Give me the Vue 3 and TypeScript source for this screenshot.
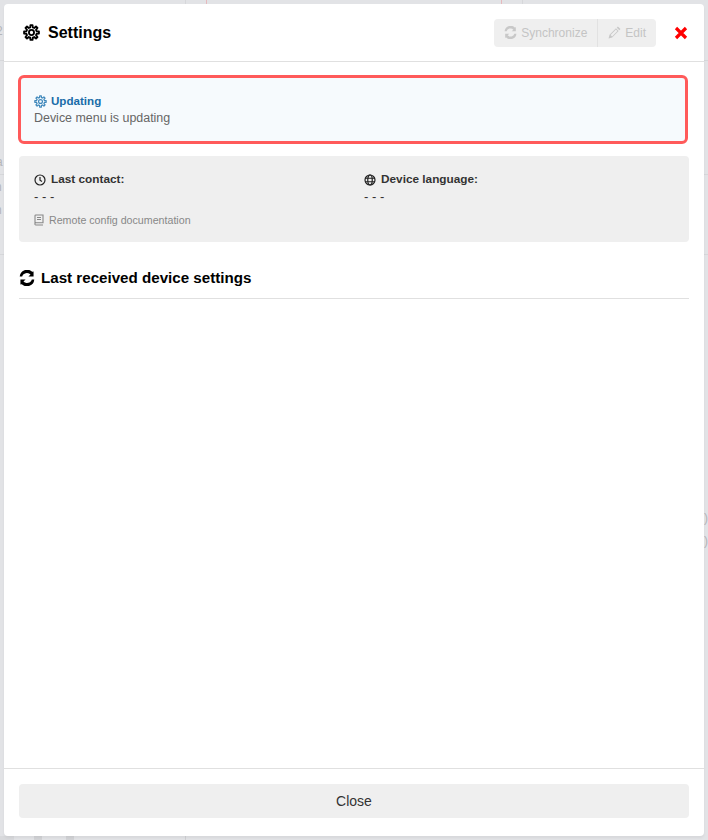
<script setup lang="ts">
const gear = (() => {
  const cx = 12, cy = 12, teeth = 8
  const pts: string[] = []
  for (let i = 0; i < teeth; i++) {
    const a = (i / teeth) * Math.PI * 2 - Math.PI / 2
    const w = Math.PI / teeth
    const p = (r: number, t: number) => `${(cx + r * Math.cos(t)).toFixed(2)} ${(cy + r * Math.sin(t)).toFixed(2)}`
    pts.push(`${i === 0 ? 'M' : 'L'}${p(7.4, a - w * 0.62)}`, `L${p(10.6, a - w * 0.36)}`, `L${p(10.6, a + w * 0.36)}`, `L${p(7.4, a + w * 0.62)}`)
  }
  return pts.join(' ') + ' Z'
})()
const syncPath = 'M20.2 3.800v6.400h-6.400l2.600-2.600A6.200 6.200 0 0 0 6 10.200H2.900a9.200 9.200 0 0 1 15.600-5.900zM3.800 20.200v-6.400h6.400l-2.600 2.600A6.200 6.200 0 0 0 18 13.800h3.100a9.200 9.200 0 0 1-15.600 5.900z'

// Faint remains of the page that sits behind the modal
const rules = [
  { x: 206, y: 0, w: 1, h: 4, c: '#e6b9bd' },
  { x: 501, y: 0, w: 1, h: 4, c: '#e6b9bd' },
  { x: 185, y: 0, w: 1, h: 4, c: '#d6d7da' },
  { x: 522, y: 0, w: 1, h: 4, c: '#d6d7da' },
  { x: 185, y: 836, w: 1, h: 4, c: '#cfd0d3' },
  { x: 0, y: 836, w: 14, h: 4, c: '#d8d9dc' },
  { x: 34, y: 836, w: 8, h: 4, c: '#d2d3d6' },
  { x: 66, y: 836, w: 8, h: 4, c: '#d2d3d6' },
  { x: 704, y: 60, w: 4, h: 1, c: '#d6d7da' },
  { x: 704, y: 174, w: 4, h: 1, c: '#d6d7da' },
  { x: 704, y: 254, w: 4, h: 1, c: '#d6d7da' },
  { x: 0, y: 60, w: 4, h: 1, c: '#d6d7da' },
  { x: 0, y: 174, w: 4, h: 1, c: '#d6d7da' },
  { x: 0, y: 254, w: 4, h: 1, c: '#d6d7da' },
]
const glyphs = [
  { t: '2', x: -4, y: 24 },
  { t: 'a', x: -4, y: 155 },
  { t: 'n', x: -5, y: 180 },
  { t: 'n', x: -5, y: 203 },
  { t: ')', x: 704, y: 511 },
  { t: ')', x: 704, y: 534 },
]
</script>

<template>
  <div class="page">
    <div class="behind" aria-hidden="true">
      <i v-for="(r, i) in rules" :key="i" class="rule" :style="{ left: r.x + 'px', top: r.y + 'px', width: r.w + 'px', height: r.h + 'px', background: r.c }"></i>
      <span v-for="(g, i) in glyphs" :key="'g' + i" class="ghost" :style="{ left: g.x + 'px', top: g.y + 'px' }">{{ g.t }}</span>
    </div>
    <section class="modal">
      <header class="head">
        <h1 class="title">
          <svg class="gear" viewBox="0 0 24 24"><path :d="gear" /><circle cx="12" cy="12" r="3.600" /></svg>
          Settings
        </h1>
        <div class="btns">
          <button class="btn">
            <svg class="ic" viewBox="2 2 20 20"><path :d="syncPath" /></svg>Synchronize
          </button>
          <button class="btn">
            <svg class="ic" viewBox="2 2 20 20"><path d="M17.200 2.800l4 4-1.700 1.700-4-4zM14.300 5.600l4 4L8.400 19.500l-5.600 1.700 1.600-5.700zM6 15.700l2.300 2.300 8.200-8.200-2.300-2.300z" fill-rule="evenodd" /></svg>Edit
          </button>
        </div>
        <svg class="x" viewBox="0 0 14 14"><path d="M2 2l10 10M12 2L2 12" /></svg>
      </header>

      <main class="body">
        <div class="alert">
          <div class="alert-title">
            <svg class="gear-sm" viewBox="0 0 24 24"><path :d="gear" /><circle cx="12" cy="12" r="3.600" /></svg>
            Updating
          </div>
          <div class="alert-text">Device menu is updating</div>
        </div>

        <div class="info">
          <div class="cols">
            <div>
              <div class="label">
                <svg class="li" viewBox="0 0 24 24"><circle cx="12" cy="12" r="10" /><path d="M12 6v6.500l4 2.500" /></svg>
                Last contact:
              </div>
              <div class="val">- - -</div>
            </div>
            <div>
              <div class="label">
                <svg class="li" viewBox="0 0 24 24"><circle cx="12" cy="12" r="10" /><ellipse cx="12" cy="12" rx="4.500" ry="10" /><path d="M2 8.500h20M2 15.500h20" /></svg>
                Device language:
              </div>
              <div class="val">- - -</div>
            </div>
          </div>
          <div class="doc">
            <svg class="book" viewBox="0 0 20 24"><path d="M2 19V3.500A1.500 1.500 0 0 1 3.500 2H18v15.500H3.500A1.500 1.500 0 0 0 2 19a2 2 0 0 0 2 3h14M6 7h8M6 11h8" /></svg>
            Remote config documentation
          </div>
        </div>

        <h2 class="section">
          <svg class="sync" viewBox="2 2 20 20"><path :d="syncPath" /></svg>
          Last received device settings
        </h2>
      </main>

      <footer class="foot">
        <button class="close">Close</button>
      </footer>
    </section>
  </div>
</template>

<style>
html, body { margin: 0; background: #e2e3e6; }
</style>

<style scoped>
.page {
  position: relative;
  width: 708px;
  height: 840px;
  padding: 4px;
  box-sizing: border-box;
  overflow: hidden;
  background: #e2e3e6;
  font-family: "Liberation Sans", Arial, sans-serif;
  color: #333;
}
.behind { position: absolute; inset: 0; }
.rule { position: absolute; display: block; }
.ghost {
  position: absolute;
  font-size: 12px;
  line-height: 14px;
  color: #b4b5b8;
}
.modal {
  position: relative;
  height: 832px;
  background: #fff;
  border-radius: 4px;
  display: flex;
  flex-direction: column;
  box-shadow: 0 2px 3px rgba(0, 0, 0, 0.05);
}
.head {
  height: 58px;
  box-sizing: border-box;
  border-bottom: 1px solid #e0e0e0;
  display: flex;
  align-items: center;
  padding: 0 16px 0 19px;
}
.title {
  flex: 1;
  margin: 0;
  font-size: 16px;
  font-weight: 700;
  color: #000;
  display: flex;
  align-items: center;
  gap: 8px;
}
.gear { width: 17px; height: 17px; fill: none; stroke: #000; stroke-width: 2.600; stroke-linejoin: round; }
.btns { display: flex; margin-right: 18px; }
.btn {
  height: 28px;
  border: 0;
  padding: 0 10px;
  background: #efefef;
  color: #c4c4c4;
  font: 12px "Liberation Sans", Arial, sans-serif;
  display: flex;
  align-items: center;
  gap: 4px;
  border-radius: 4px 0 0 4px;
  border-right: 1px solid #e2e2e2;
}
.btn + .btn { border-radius: 0 4px 4px 0; border-right: 0; }
.ic { width: 13px; height: 13px; fill: #c8c8c8; }
.x { width: 14px; height: 14px; fill: none; stroke: #f00; stroke-width: 3.200; }
.body {
  flex: 1;
  padding: 13px 15px 0;
}
.alert {
  height: 69px;
  box-sizing: border-box;
  border: 3px solid #ff5a5a;
  border-radius: 6px;
  background: #f6fafd;
  padding: 14px 13px 0;
  transform: translateX(-1px);
}
.alert-title {
  font-size: 11.600px;
  line-height: 18px;
  font-weight: 700;
  color: #196ca8;
  display: flex;
  align-items: center;
  gap: 4px;
}
.gear-sm { width: 13px; height: 13px; fill: none; stroke: #3f88bb; stroke-width: 2.200; stroke-linejoin: round; }
.alert-text { font-size: 12.450px; line-height: 17px; color: #666; }
.info {
  margin-top: 12px;
  height: 86px;
  box-sizing: border-box;
  background: #efefef;
  border-radius: 4px;
  padding: 15px 15px 0;
}
.cols { display: grid; grid-template-columns: 330px 1fr; }
.label {
  font-size: 11.800px;
  line-height: 17px;
  font-weight: 700;
  color: #333;
  display: flex;
  align-items: center;
  gap: 5px;
}
.li { width: 12px; height: 12px; fill: none; stroke: #222; stroke-width: 2.400; }
.val { font-size: 13px; line-height: 17px; color: #333; }
.doc {
  margin-top: 8px;
  font-size: 10.670px;
  line-height: 14px;
  color: #888;
  display: flex;
  align-items: center;
  gap: 5px;
}
.book { width: 10px; height: 12px; fill: none; stroke: #888; stroke-width: 2.200; }
.section {
  margin: 26px 0 0;
  padding-bottom: 10px;
  height: 20px;
  font-size: 15.150px;
  line-height: 20px;
  font-weight: 700;
  color: #000;
  border-bottom: 1px solid #e0e0e0;
  display: flex;
  align-items: center;
  gap: 6px;
}
.sync { width: 16px; height: 16px; fill: #000; }
.foot {
  border-top: 1px solid #e0e0e0;
  padding: 15px;
  height: 68px;
  box-sizing: border-box;
}
.close {
  display: block;
  width: 100%;
  height: 34px;
  border: 0;
  border-radius: 4px;
  background: #efefef;
  color: #333;
  font: 14px "Liberation Sans", Arial, sans-serif;
}
</style>
